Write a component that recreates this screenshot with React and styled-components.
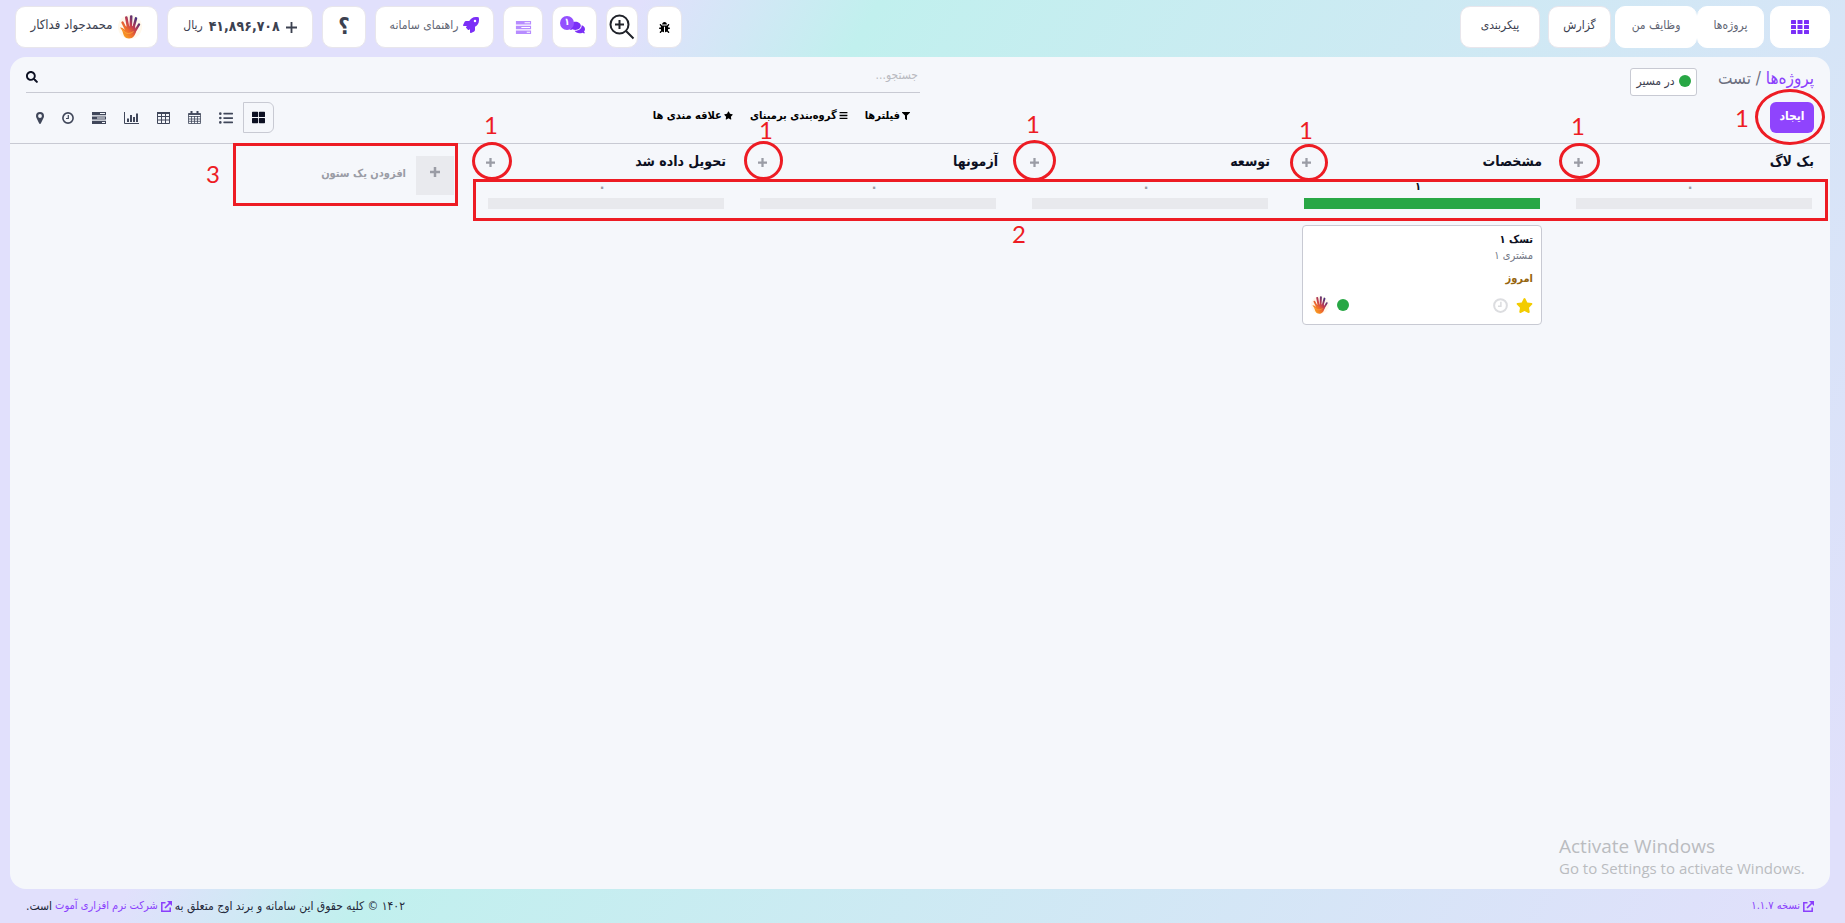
import React from 'react';
import styled, { createGlobalStyle, css } from 'styled-components';
import { FaBug, FaRocket, FaComments, FaSearch, FaThLarge, FaListUl, FaFilter, FaBars, FaStar } from 'react-icons/fa';

const GlobalStyle = createGlobalStyle`
  *, *::before, *::after { box-sizing: border-box; }
  body { margin: 0; }
  button, input { font: inherit; color: inherit; }
  svg { display: block; flex: none; }
`;

const color = {
  purple: '#8a3ffc',
  panel: '#f5f7fb',
  line: '#c8cad3',
  text: '#3c4150',
  dark: '#0c1022',
  muted: '#9a9ca5',
  green: '#28a745',
  red: '#ed1c24',
};

const Page = styled.div`
  position: relative;
  display: flex;
  flex-direction: column;
  min-height: 100vh;
  direction: rtl;
  font-family: 'DejaVu Sans Condensed', 'DejaVu Sans', sans-serif;
  font-size: 12px;
  line-height: 18px;
  color: ${color.text};
  background: linear-gradient(120deg, #e1e0fc 27%, #c1f0ee 37%, #e0e0fb 97%);
`;

/* Header */

const Header = styled.header`
  display: flex;
  justify-content: space-between;
  height: 57px;
  padding: 6px 15px 9px;
`;

const HeaderGroup = styled.nav`
  display: flex;
  gap: ${(p) => p.$gap}px;
`;

const HeaderButton = styled.button`
  display: flex;
  align-items: center;
  justify-content: center;
  gap: ${(p) => p.$gap || 0}px;
  width: ${(p) => p.$width}px;
  height: 42px;
  padding: 0 0 ${(p) => (p.$lift ? 4 : 0)}px;
  margin-inline-start: ${(p) => p.$space || 0}px;
  border: 1px solid ${(p) => (p.$flat ? '#fff' : '#e8e6ec')};
  border-radius: 10px;
  background: #fff;
  white-space: nowrap;
  color: ${(p) => (p.$soft ? '#626674' : color.text)};
  cursor: pointer;
`;

const UserName = styled.span`
  padding-bottom: 4px;
  font-size: 13px;
`;

const Currency = styled.span`
  padding-bottom: 4px;
`;

const Amount = styled.strong`
  padding-bottom: 2px;
  font-size: 14px;
`;

const QuestionMark = styled.strong`
  font-size: 22px;
  line-height: 22px;
`;

const ChatIcon = styled.span`
  position: relative;
  display: flex;
  padding-left: 6px;
  color: #7b2ff7;
`;

const ChatBadge = styled.span`
  position: absolute;
  top: -4px;
  left: -4px;
  width: 14px;
  height: 14px;
  border-radius: 7px;
  background: #9450ff;
  color: #fff;
  font-size: 10px;
  font-weight: bold;
  line-height: 12px;
`;

/* Main panel */

const Panel = styled.main`
  flex: 1;
  margin: 0 15px 0 10px;
  border-radius: 16px;
  background: ${color.panel};
`;

const ControlPanel = styled.section`
  display: grid;
  grid-template-columns: 1fr 1fr;
  height: 87px;
  padding: 0 16px;
  border-bottom: 1px solid ${color.line};
`;

const TitleSide = styled.div`
  display: flex;
  flex-direction: column;
  align-items: flex-start;
`;

const TitleRow = styled.div`
  display: flex;
  align-items: flex-start;
  gap: 21px;
  height: 45px;
  padding-top: 9px;
`;

const Breadcrumb = styled.h1`
  margin: 0;
  font-size: 17px;
  font-weight: normal;
  line-height: 24px;
  color: #6c7080;
`;

const Link = styled.a`
  color: ${color.purple};
  text-decoration: none;
`;

const StatusButton = styled.button`
  display: flex;
  align-items: center;
  justify-content: center;
  gap: 4px;
  width: 67px;
  height: 28px;
  margin-top: 2px;
  padding: 0 0 2px;
  border: 1px solid ${color.line};
  border-radius: 3px;
  background: #fff;
  white-space: nowrap;
`;

const Dot = styled.span`
  width: 12px;
  height: 12px;
  border-radius: 50%;
  background: ${color.green};
`;

const CreateButton = styled.button`
  width: 44px;
  height: 31px;
  padding: 0 0 4px;
  border: 0;
  border-radius: 6px;
  background: #8f44fd;
  color: #fff;
  font-size: 12px;
  font-weight: bold;
`;

const SearchSide = styled.div`
  display: flex;
  flex-direction: column;
`;

const SearchBox = styled.form`
  display: flex;
  align-items: center;
  height: 36px;
  padding-top: 4px;
  border-bottom: 1px solid ${color.line};
  color: ${color.dark};
`;

const SearchInput = styled.input`
  flex: 1;
  min-width: 0;
  padding: 0 2px 4px;
  border: 0;
  outline: 0;
  background: transparent;
  &::placeholder { color: #b9bac0; opacity: 1; }
`;

const IconButton = styled.button`
  display: flex;
  padding: 0;
  border: 0;
  background: transparent;
  color: inherit;
`;

const ToolRow = styled.div`
  display: flex;
  justify-content: space-between;
  height: 31px;
  margin-top: 9px;
`;

const FilterGroup = styled.div`
  display: flex;
  align-items: center;
  gap: 17px;
  padding: 0 10px 4px 0;
`;

const FilterButton = styled.button`
  display: flex;
  align-items: center;
  gap: 2px;
  padding: 0;
  border: 0;
  background: transparent;
  color: #000;
  font-size: 11px;
  font-weight: bold;
  white-space: nowrap;
`;

const ViewSwitch = styled.div`
  display: flex;
  gap: 2px;
  padding-left: 2px;
`;

const ViewButton = styled.button`
  display: flex;
  align-items: center;
  padding: 0 8px;
  border: 0;
  background: transparent;
  color: #40475a;
  ${(p) => p.$active && css`
    border: 1px solid ${color.line};
    border-radius: 0 6px 6px 0;
    color: ${color.dark};
  `}
`;

/* Kanban board */

const Board = styled.section`
  display: flex;
`;

const Column = styled.article`
  flex: none;
  width: 272px;
  padding: 5px 16px 0;
`;

const ColumnHead = styled.div`
  display: flex;
  justify-content: space-between;
  align-items: center;
  height: 24px;
`;

const ColumnTitle = styled.h2`
  margin: 0;
  font-size: 14px;
  line-height: 24px;
  color: ${color.dark};
`;

const AddButton = styled(IconButton)`
  padding-top: 3px;
  color: ${color.muted};
`;

const Count = styled.div`
  height: 25px;
  padding: 5px 8px 0 0;
  text-align: center;
  font-size: ${(p) => (p.$full ? 11 : 14)}px;
  font-weight: bold;
  color: ${(p) => (p.$full ? color.dark : color.muted)};
`;

const Progress = styled.div`
  height: 11px;
  margin: 0 2px 16px;
  background: ${(p) => (p.$full ? color.green : '#e8e9ed')};
`;

const Card = styled.div`
  display: flex;
  flex-direction: column;
  height: 100px;
  padding: 6px 8px 10px;
  border: 1px solid ${color.line};
  border-radius: 4px;
  background: #fff;
  font-size: 11px;
  line-height: 16px;
`;

const CardTitle = styled.strong`
  color: ${color.dark};
`;

const Customer = styled.span`
  color: #737785;
`;

const DueDate = styled.strong`
  margin-top: 7px;
  color: #96650f;
`;

const CardFoot = styled.div`
  display: flex;
  align-items: center;
  justify-content: space-between;
  margin-top: auto;
`;

const CardTools = styled.div`
  display: flex;
  align-items: center;
  gap: 8px;
  color: #dcdde0;
`;

const AddColumn = styled.button`
  display: flex;
  align-items: center;
  gap: 10px;
  align-self: flex-start;
  margin: 12px 16px 0 0;
  padding: 0;
  border: 0;
  background: transparent;
  color: ${color.muted};
  font-size: 11px;
  font-weight: bold;
`;

const AddColumnLabel = styled.span`
  padding-bottom: 4px;
`;

const AddColumnIcon = styled.span`
  display: flex;
  align-items: center;
  justify-content: center;
  width: 38px;
  height: 39px;
  padding-bottom: 7px;
  background: #e9eaee;
`;

/* Footer */

const Footer = styled.footer`
  display: flex;
  justify-content: space-between;
  align-items: flex-start;
  height: 34px;
  padding: 8px 31px 0 26px;
  font-size: 12px;
  color: #23283a;
`;

const FooterLink = styled(Link)`
  display: inline-flex;
  align-items: center;
  gap: 3px;
  font-size: 11px;
`;

const FooterText = styled.p`
  margin: 0;
  display: flex;
  align-items: flex-start;
  gap: 3px;
`;

/* Layers that lie over the page */

const Watermark = styled.div`
  position: absolute;
  right: 50px;
  bottom: 45px;
  width: 236px;
  direction: ltr;
  font-family: 'Open Sans', 'Noto Sans', sans-serif;
  font-size: 15px;
  line-height: 19px;
  white-space: nowrap;
  color: #babcc0;
  pointer-events: none;
`;

const WatermarkTitle = styled.div`
  font-size: 19px;
  line-height: 26px;
`;

const Mark = styled.span`
  position: absolute;
  top: ${(p) => p.$top}px;
  right: ${(p) => p.$right}px;
  width: ${(p) => p.$width}px;
  height: ${(p) => p.$height}px;
  border: 3px solid ${color.red};
  border-radius: ${(p) => (p.$round ? '50%' : 0)};
  pointer-events: none;
`;

const MarkNumber = styled.span`
  position: absolute;
  top: ${(p) => p.$top}px;
  right: ${(p) => p.$right}px;
  font-family: Lato, sans-serif;
  font-size: 24px;
  line-height: 24px;
  color: ${color.red};
  pointer-events: none;
`;

/* Icons */

const PlusIcon = ({ size, weight }) => (
  <svg width={size} height={size} viewBox="0 0 12 12" fill="none" stroke="currentColor" aria-hidden="true">
    <path d="M6 0v12M0 6h12" strokeWidth={weight} />
  </svg>
);

const PinIcon = () => (
  <svg width="8" height="12" viewBox="0 0 8 12" fill="currentColor" aria-hidden="true">
    <path fillRule="evenodd" d="M4 0a4 4 0 0 1 4 4c0 .7-.1 1.200-.4 1.700L4.800 11.500a.9.9 0 0 1-1.600 0L.4 5.700A4 4 0 0 1 0 4a4 4 0 0 1 4-4zm0 2.100a1.900 1.900 0 1 0 0 3.800 1.900 1.900 0 0 0 0-3.800z" />
  </svg>
);

const Hand = ({ size }) => (
  <svg width={size} height={size} viewBox="0 0 24 24" aria-hidden="true">
    <defs>
      <linearGradient id="hand" gradientUnits="userSpaceOnUse" x1="4" y1="20" x2="20" y2="5">
        <stop offset="0" stopColor="#f9a11f" />
        <stop offset=".35" stopColor="#ee6a2c" />
        <stop offset=".62" stopColor="#c03a50" />
        <stop offset="1" stopColor="#40307e" />
      </linearGradient>
    </defs>
    <circle cx="12" cy="12" r="12" fill="#fff8ec" />
    <g stroke="url(#hand)" strokeLinecap="round" fill="none">
      <path d="M4.500 7.500 7.800 14" strokeWidth="2.4" />
      <path d="M8.300 2.500 10 12" strokeWidth="2.6" />
      <path d="M13.200 1.500 12.700 12" strokeWidth="2.6" />
      <path d="M18 3.400 15.400 13" strokeWidth="2.5" />
      <path d="M21 9.500 16.500 17" strokeWidth="2.4" />
    </g>
    <path d="M2 12.500c1.800-.2 3.600.8 4.800 2.300L7 11.500l10-.5 1 4.500c-.3 4.500-3 8-7 8-4.500 0-5.500-3.500-6.300-6.500C4.200 15.200 3 13.800 2 12.500z" fill="url(#hand)" />
    <path d="M4.500 14.500c2 4 6.500 5.500 11 2" fill="none" stroke="#ffb23a" strokeWidth="1" opacity=".7" />
  </svg>
);

const TasksIcon = ({ width = 14, height = 12, fill = 'currentColor', gapFill = '#f5f7fb' }) => (
  <svg width={width} height={height} viewBox="0 0 14 12" fill={fill} aria-hidden="true">
    <path d="M0 0h14v3.200H0zM0 4.400h14v3.200H0zM0 8.800h14V12H0z" />
    <path d="M8 1.100h5v1H8zM5 5.500h8v1H5zM10 9.900h3v1h-3z" fill={gapFill} />
  </svg>
);

const ZoomIcon = () => (
  <svg width="26" height="26" viewBox="0 0 26 26" fill="none" stroke="#20232a" aria-hidden="true">
    <circle cx="10.500" cy="10.500" r="9" strokeWidth="2" />
    <path d="M10.500 6v9M6 10.500h9M17 17l7.500 7.500" strokeWidth="2" />
  </svg>
);

const AppsIcon = () => (
  <svg width="18" height="14" viewBox="0 0 18 14" fill="#7b2ff7" aria-hidden="true">
    {[0, 5, 10].map((y) => [0, 6.5, 13].map((x) => (
      <rect key={`${x}-${y}`} x={x} y={y} width="5" height="4" rx=".6" />
    )))}
  </svg>
);

const CalendarIcon = () => (
  <svg width="13" height="13" viewBox="0 0 13 13" fill="none" stroke="currentColor" aria-hidden="true">
    <path d="M.5 2.500h12v10H.5zM.5 5.500h12M.5 8h12M.5 10.300h12M3.500 5v7.500M6.500 5v7.500M9.500 5v7.500" strokeWidth=".8" />
    <path d="M.5 3.200h12" strokeWidth="1.500" />
    <path d="M3.500 0v3M9.500 0v3" strokeWidth="2" />
  </svg>
);

const TableIcon = () => (
  <svg width="13" height="12" viewBox="0 0 13 12" fill="none" stroke="currentColor" aria-hidden="true">
    <path d="M.5 1h12v10.500H.5zM.5 4.500h12M.5 8h12M4.500 1v10.500M8.500 1v10.500" />
    <path d="M0 1h13" strokeWidth="2" />
  </svg>
);

const ChartIcon = () => (
  <svg width="15" height="12" viewBox="0 0 15 12" fill="none" stroke="currentColor" aria-hidden="true">
    <path d="M.5 0v11.500H15" />
    <path d="M4 10V6.500M7 10V3M10 10V5M13 10V1.500" strokeWidth="2" />
  </svg>
);

const ClockIcon = ({ size = 12 }) => (
  <svg width={size} height={size} viewBox="0 0 12 12" fill="none" stroke="currentColor" aria-hidden="true">
    <circle cx="6" cy="6" r="5.100" strokeWidth="1.600" />
    <path d="M6.300 3v3.500H4" strokeWidth="1.200" />
  </svg>
);

const ExternalIcon = () => (
  <svg width="11" height="11" viewBox="0 0 11 11" fill="none" stroke={color.purple} aria-hidden="true">
    <path d="M4.500 1.700H.8v8.500h8.400V6.500" strokeWidth="1.500" />
    <path d="M4 7l5-5" strokeWidth="1.700" />
    <path d="M6 0h5v5z" fill={color.purple} stroke="none" />
  </svg>
);

const columns = [
  { title: 'بک لاگ', count: '۰' },
  { title: 'مشخصات', count: '۱', full: true },
  { title: 'توسعه', count: '۰' },
  { title: 'آزمونها', count: '۰' },
  { title: 'تحویل داده شد', count: '۰' },
];

const views = [
  { label: 'کانبان', icon: <FaThLarge size={13} />, active: true },
  { label: 'لیست', icon: <FaListUl size={14} /> },
  { label: 'تقویم', icon: <CalendarIcon /> },
  { label: 'جدول', icon: <TableIcon /> },
  { label: 'نمودار', icon: <ChartIcon /> },
  { label: 'گانت', icon: <TasksIcon /> },
  { label: 'فعالیت', icon: <ClockIcon /> },
  { label: 'نقشه', icon: <PinIcon /> },
];

const marks = [
  { top: 89, right: 20, width: 70, height: 56, round: true },
  { top: 143, right: 245, width: 41, height: 36, round: true },
  { top: 144, right: 517, width: 38, height: 37, round: true },
  { top: 140, right: 789, width: 43, height: 41, round: true },
  { top: 141, right: 1062, width: 39, height: 39, round: true },
  { top: 142, right: 1333, width: 40, height: 38, round: true },
  { top: 179, right: 17, width: 1355, height: 42 },
  { top: 143, right: 1387, width: 225, height: 63 },
];

const markNumbers = [
  { text: '1', top: 106, right: 96 },
  { text: '1', top: 114, right: 260 },
  { text: '1', top: 118, right: 532 },
  { text: '1', top: 112, right: 805 },
  { text: '1', top: 118, right: 1072 },
  { text: '1', top: 113, right: 1347 },
  { text: '2', top: 222, right: 819 },
  { text: '3', top: 162, right: 1625 },
];

export default function App() {
  return (
    <Page lang="fa">
      <GlobalStyle />
      <Header>
        <HeaderGroup $gap={0}>
          <HeaderButton $width={60} $flat aria-label="برنامه‌ها"><AppsIcon /></HeaderButton>
          <HeaderButton $width={67} $space={6} $flat $soft $lift>پروژه‌ها</HeaderButton>
          <HeaderButton $width={82} $flat $soft $lift>وظایف من</HeaderButton>
          <HeaderButton $width={63} $space={4} $lift>گزارش</HeaderButton>
          <HeaderButton $width={80} $space={8} $lift>پیکربندی</HeaderButton>
        </HeaderGroup>
        <HeaderGroup $gap={9}>
          <HeaderButton $width={35} aria-label="اشکال‌زدایی"><FaBug size={11} color="#000" /></HeaderButton>
          <HeaderButton $width={32} aria-label="بزرگ‌نمایی"><ZoomIcon /></HeaderButton>
          <HeaderButton $width={45} aria-label="گفتگوها">
            <ChatIcon><FaComments size={15} /><ChatBadge>۱</ChatBadge></ChatIcon>
          </HeaderButton>
          <HeaderButton $width={40} aria-label="کارها">
            <TasksIcon width={17} height={13} fill="#b78cff" gapFill="#fff" />
          </HeaderButton>
          <HeaderButton $width={119} $gap={5} $lift $soft><FaRocket size={16} color="#7b2ff7" />راهنمای سامانه</HeaderButton>
          <HeaderButton $width={44} aria-label="راهنما"><QuestionMark>؟</QuestionMark></HeaderButton>
          <HeaderButton $width={146} $gap={6}>
            <PlusIcon size={11} weight={2} />
            <Amount>۴۱,۸۹۶,۷۰۸</Amount>
            <Currency>ریال</Currency>
          </HeaderButton>
          <HeaderButton $width={143} $gap={6}><Hand size={24} /><UserName>محمدجواد فداکار</UserName></HeaderButton>
        </HeaderGroup>
      </Header>

      <Panel>
        <ControlPanel>
          <TitleSide>
            <TitleRow>
              <Breadcrumb><Link href="#projects">پروژه‌ها</Link> / تست</Breadcrumb>
              <StatusButton><Dot />در مسیر</StatusButton>
            </TitleRow>
            <CreateButton>ایجاد</CreateButton>
          </TitleSide>
          <SearchSide>
            <SearchBox role="search">
              <SearchInput type="text" placeholder="جستجو..." aria-label="جستجو" />
              <IconButton type="button" aria-label="جستجو"><FaSearch size={12} /></IconButton>
            </SearchBox>
            <ToolRow>
              <FilterGroup>
                <FilterButton><FaFilter size={8} />فیلترها</FilterButton>
                <FilterButton><FaBars size={9} />گروه‌بندی برمبنای</FilterButton>
                <FilterButton><FaStar size={9} />علاقه مندی ها</FilterButton>
              </FilterGroup>
              <ViewSwitch>
                {views.map((v) => (
                  <ViewButton key={v.label} $active={v.active} aria-label={v.label}>{v.icon}</ViewButton>
                ))}
              </ViewSwitch>
            </ToolRow>
          </SearchSide>
        </ControlPanel>

        <Board>
          {columns.map((c) => (
            <Column key={c.title}>
              <ColumnHead>
                <ColumnTitle>{c.title}</ColumnTitle>
                <AddButton aria-label="افزودن"><PlusIcon size={9} weight={3} /></AddButton>
              </ColumnHead>
              <Count $full={c.full}>{c.count}</Count>
              <Progress $full={c.full} />
              {c.full && (
                <Card>
                  <CardTitle>تسک ۱</CardTitle>
                  <Customer>مشتری ۱</Customer>
                  <DueDate>امروز</DueDate>
                  <CardFoot>
                    <CardTools>
                      <FaStar size={17} color="#f3cc00" />
                      <ClockIcon size={15} />
                    </CardTools>
                    <CardTools><Dot /><Hand size={18} /></CardTools>
                  </CardFoot>
                </Card>
              )}
            </Column>
          ))}
          <AddColumn>
            <AddColumnIcon><PlusIcon size={10} weight={3} /></AddColumnIcon>
            <AddColumnLabel>افزودن یک ستون</AddColumnLabel>
          </AddColumn>
        </Board>
      </Panel>

      <Footer>
        <FooterLink href="#version"><ExternalIcon />نسخه ۱.۱.۷</FooterLink>
        <FooterText>
          <span>۱۴۰۲ © کلیه حقوق این سامانه و برند اوج متعلق به</span>
          <FooterLink href="#company"><ExternalIcon />شرکت نرم افزاری آموت</FooterLink>
          <span>است.</span>
        </FooterText>
      </Footer>

      <Watermark>
        <WatermarkTitle>Activate Windows</WatermarkTitle>
        Go to Settings to activate Windows.
      </Watermark>
      {marks.map((m) => (
        <Mark key={`${m.top}-${m.right}`} $top={m.top} $right={m.right} $width={m.width} $height={m.height} $round={m.round} />
      ))}
      {markNumbers.map((n) => (
        <MarkNumber key={n.right} $top={n.top} $right={n.right}>{n.text}</MarkNumber>
      ))}
    </Page>
  );
}
